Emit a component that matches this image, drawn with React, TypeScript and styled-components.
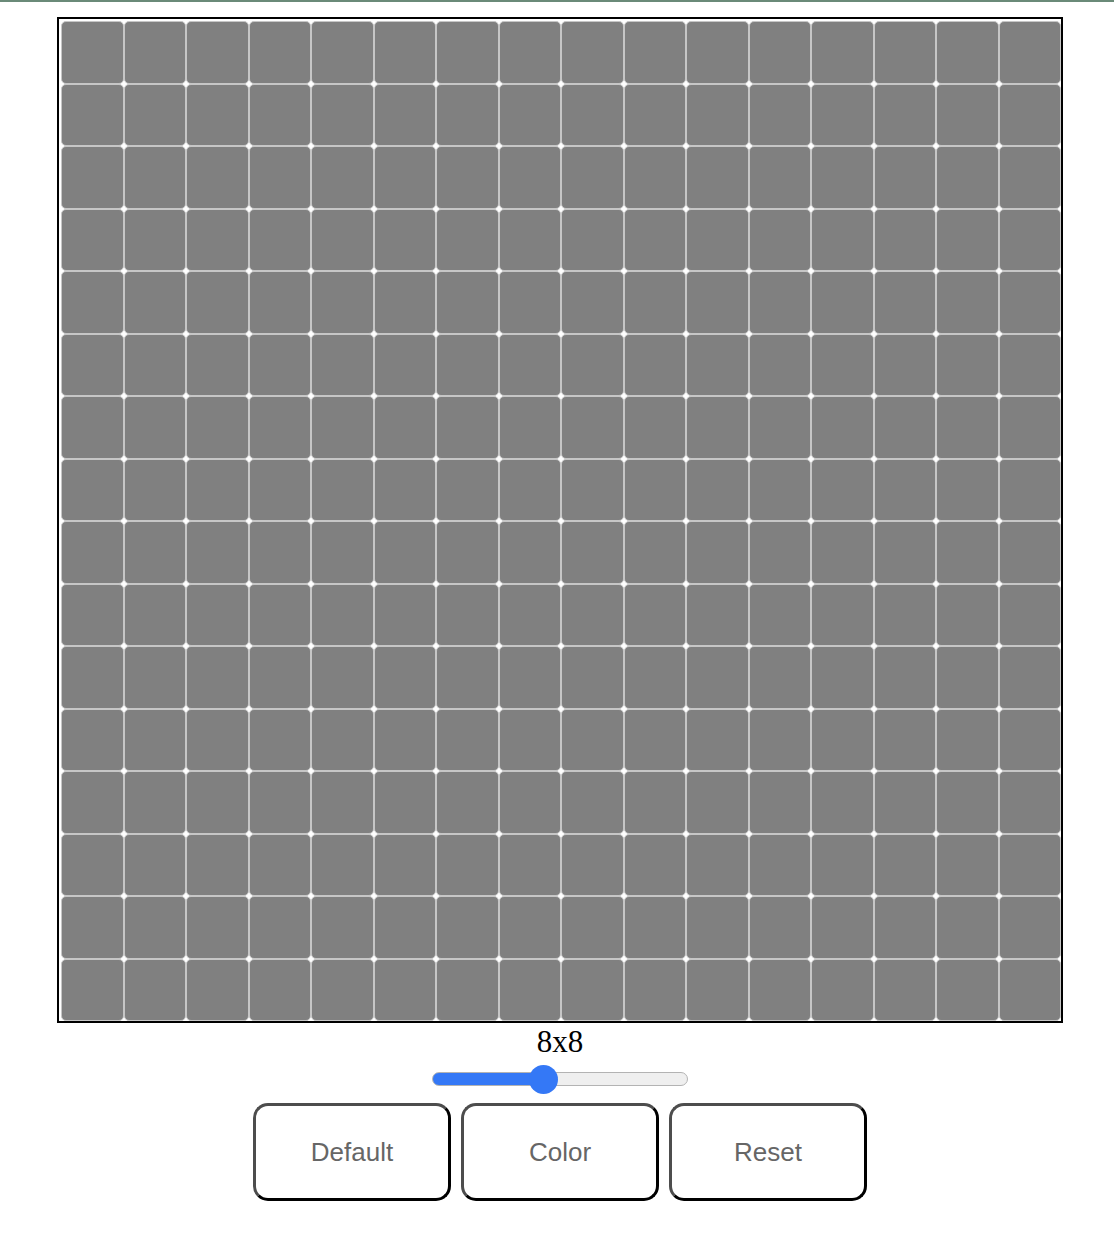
import React from "react";
import styled, { createGlobalStyle } from "styled-components";

const GlobalStyle = createGlobalStyle`
  html, body {
    margin: 0;
    padding: 0;
    background: #ffffff;
  }
  body {
    font-family: "Liberation Serif", "Times New Roman", serif;
  }
`;

const TopBar = styled.div`
  height: 2px;
  background: #6a8a78;
`;

const Page = styled.main`
  display: flex;
  flex-direction: column;
  align-items: center;
  padding: 15px 0 0 6px;
`;

const Board = styled.div`
  display: grid;
  grid-template-columns: repeat(16, 1fr);
  grid-template-rows: repeat(16, 1fr);
  width: 1000px;
  height: 1000px;
  padding: 2px 0 0 2px;
  border: 2px solid #000000;
  background: #ffffff;
`;

const Cell = styled.div`
  box-sizing: border-box;
  background: #808080;
  border: 1px solid #c6c6c6;
  border-radius: 5px;
`;

const SizeLabel = styled.div`
  margin-top: 1px;
  font-family: "Liberation Serif", "Times New Roman", serif;
  font-size: 31px;
  line-height: 36px;
  color: #000000;
`;

const Slider = styled.input`
  -webkit-appearance: none;
  appearance: none;
  margin: 4px 0 0;
  width: 256px;
  height: 30px;
  background: transparent;

  &::-webkit-slider-runnable-track {
    box-sizing: border-box;
    height: 14px;
    border: 1px solid #b3b3b3;
    border-radius: 7px;
    background: linear-gradient(to right, #3478f6 0, #3478f6 44%, #efefef 44%, #efefef 100%);
  }

  &::-webkit-slider-thumb {
    -webkit-appearance: none;
    appearance: none;
    width: 29px;
    height: 29px;
    margin-top: -8.5px;
    border: none;
    border-radius: 50%;
    background: #3478f6;
  }
`;

const ButtonRow = styled.div`
  display: flex;
  gap: 10px;
  margin-top: 9px;
`;

const ActionButton = styled.button`
  box-sizing: border-box;
  width: 198px;
  height: 98px;
  border: 3px solid;
  border-color: #4d4d4d #000000 #000000 #4d4d4d;
  border-radius: 15px;
  background: #ffffff;
  color: #666666;
  font-family: "Liberation Sans", Arial, sans-serif;
  font-size: 26px;
  cursor: pointer;
`;

const cells = Array.from({ length: 256 }, (_, i) => i);

export default function App() {
  return (
    <>
      <GlobalStyle />
      <TopBar />
      <Page>
        <Board>
          {cells.map((i) => (
            <Cell key={i} />
          ))}
        </Board>
        <SizeLabel>8x8</SizeLabel>
        <Slider type="range" min={2} max={16} defaultValue={8} />
        <ButtonRow>
          <ActionButton>Default</ActionButton>
          <ActionButton>Color</ActionButton>
          <ActionButton>Reset</ActionButton>
        </ButtonRow>
      </Page>
    </>
  );
}
